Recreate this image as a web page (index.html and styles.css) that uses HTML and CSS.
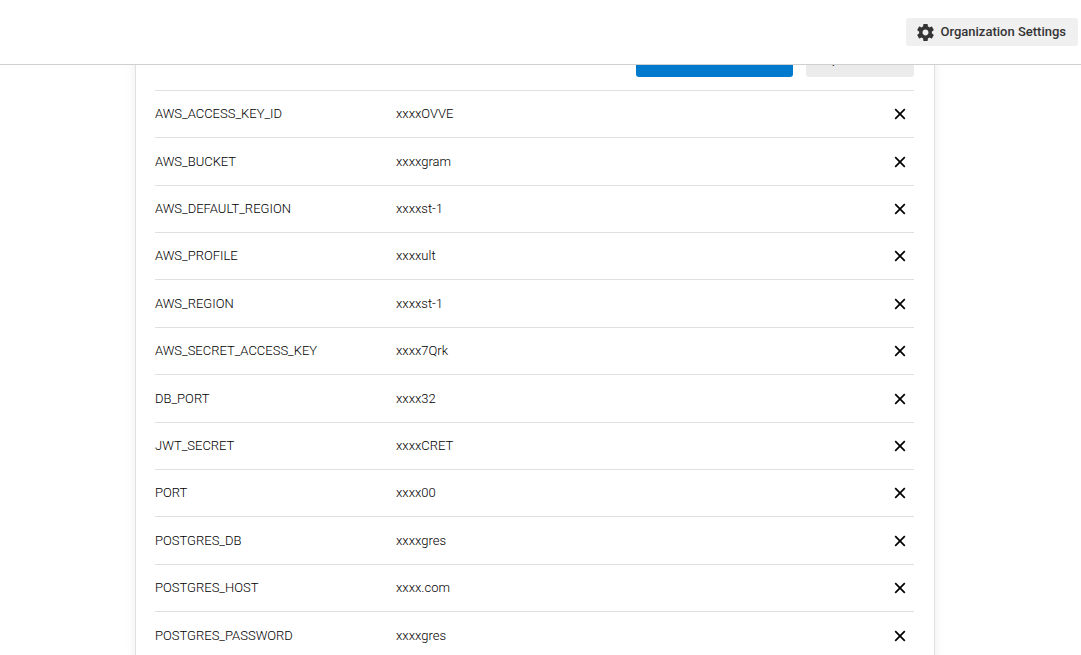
FILE: index.html
```
<!DOCTYPE html>
<html lang="en">
<head>
<meta charset="utf-8">
<title>Environment Variables</title>
<link rel="stylesheet" href="styles.css">
</head>
<body>
<svg class="symbols" aria-hidden="true">
  <symbol id="close" viewBox="0 0 12 12"><path d="M1.2 1.2 10.8 10.8M10.8 1.2 1.2 10.8" fill="none" stroke="currentColor" stroke-width="1.7"/></symbol>
</svg>
<header class="topbar">
  <button class="settings" type="button">
    <svg class="gear" viewBox="2 2 20 20" aria-hidden="true"><path fill="currentColor" d="M19.43 12.98c.04-.32.07-.64.07-.98s-.03-.66-.07-.98l2.11-1.65c.19-.15.24-.42.12-.64l-2-3.46c-.12-.22-.39-.3-.61-.22l-2.49 1c-.52-.4-1.08-.73-1.69-.98l-.38-2.65C14.46 2.18 14.25 2 14 2h-4c-.25 0-.46.18-.49.42l-.38 2.65c-.61.25-1.17.59-1.69.98l-2.49-1c-.23-.09-.49 0-.61.22l-2 3.46c-.13.22-.07.49.12.64l2.11 1.65c-.04.32-.07.65-.07.98s.03.66.07.98l-2.11 1.65c-.19.15-.24.42-.12.64l2 3.46c.12.22.39.3.61.22l2.49-1c.52.4 1.08.73 1.69.98l.38 2.65c.03.24.24.42.49.42h4c.25 0 .46-.18.49-.42l.38-2.65c.61-.25 1.17-.59 1.69-.98l2.49 1c.23.09.49 0 .61-.22l2-3.46c.12-.22.07-.49-.12-.64l-2.11-1.65zM12 15.5c-1.93 0-3.5-1.57-3.5-3.5s1.57-3.5 3.5-3.5 3.5 1.57 3.5 3.5-1.57 3.5-3.5 3.5z"/></svg>
    Organization Settings
  </button>
</header>
<main class="content">
  <section class="card">
    <div class="toolbar">
      <button class="action primary" type="button">Add Environment Variable</button>
      <button class="action" type="button">Import Variables</button>
    </div>
    <table class="vars">
      <tbody>
        <tr><td class="name">AWS_ACCESS_KEY_ID</td><td>xxxxOVVE</td><td class="remove"><button type="button" aria-label="Remove AWS_ACCESS_KEY_ID"><svg><use href="#close"/></svg></button></td></tr>
        <tr><td class="name">AWS_BUCKET</td><td>xxxxgram</td><td class="remove"><button type="button" aria-label="Remove AWS_BUCKET"><svg><use href="#close"/></svg></button></td></tr>
        <tr><td class="name">AWS_DEFAULT_REGION</td><td>xxxxst-1</td><td class="remove"><button type="button" aria-label="Remove AWS_DEFAULT_REGION"><svg><use href="#close"/></svg></button></td></tr>
        <tr><td class="name">AWS_PROFILE</td><td>xxxxult</td><td class="remove"><button type="button" aria-label="Remove AWS_PROFILE"><svg><use href="#close"/></svg></button></td></tr>
        <tr><td class="name">AWS_REGION</td><td>xxxxst-1</td><td class="remove"><button type="button" aria-label="Remove AWS_REGION"><svg><use href="#close"/></svg></button></td></tr>
        <tr><td class="name">AWS_SECRET_ACCESS_KEY</td><td>xxxx7Qrk</td><td class="remove"><button type="button" aria-label="Remove AWS_SECRET_ACCESS_KEY"><svg><use href="#close"/></svg></button></td></tr>
        <tr><td class="name">DB_PORT</td><td>xxxx32</td><td class="remove"><button type="button" aria-label="Remove DB_PORT"><svg><use href="#close"/></svg></button></td></tr>
        <tr><td class="name">JWT_SECRET</td><td>xxxxCRET</td><td class="remove"><button type="button" aria-label="Remove JWT_SECRET"><svg><use href="#close"/></svg></button></td></tr>
        <tr><td class="name">PORT</td><td>xxxx00</td><td class="remove"><button type="button" aria-label="Remove PORT"><svg><use href="#close"/></svg></button></td></tr>
        <tr><td class="name">POSTGRES_DB</td><td>xxxxgres</td><td class="remove"><button type="button" aria-label="Remove POSTGRES_DB"><svg><use href="#close"/></svg></button></td></tr>
        <tr><td class="name">POSTGRES_HOST</td><td>xxxx.com</td><td class="remove"><button type="button" aria-label="Remove POSTGRES_HOST"><svg><use href="#close"/></svg></button></td></tr>
        <tr><td class="name">POSTGRES_PASSWORD</td><td>xxxxgres</td><td class="remove"><button type="button" aria-label="Remove POSTGRES_PASSWORD"><svg><use href="#close"/></svg></button></td></tr>
      </tbody>
    </table>
  </section>
</main>
</body>
</html>
```

FILE: styles.css
```
* { box-sizing: border-box; }

body {
  margin: 0;
  height: 100vh;
  display: flex;
  flex-direction: column;
  overflow: hidden;
  background: #fff;
  color: #161616;
  font: 13px/16px Roboto, "Liberation Sans", sans-serif;
}

button {
  border: 0;
  font: inherit;
  color: inherit;
  cursor: pointer;
}

.symbols { display: none; }

.topbar {
  flex: none;
  display: flex;
  justify-content: flex-end;
  padding: 18px 3px;
  border-bottom: 1px solid #d0d0d0;
}

.settings {
  display: flex;
  align-items: center;
  gap: 7px;
  height: 28px;
  padding: 0 12px 0 11px;
  border-radius: 3px;
  background: #f0f0f0;
  color: #343434;
  font-weight: 500;
}

.gear {
  width: 17px;
  height: 17px;
}

.content {
  flex: 1;
  min-height: 0;
  overflow: hidden;
  padding-right: 11px;
}

/* The list is scrolled so that the toolbar is partly under the top bar. */
.card {
  max-width: 800px;
  margin: -20px auto 0;
  padding: 0 20px 0 19px;
  border: 1px solid #e0e0e0;
  border-top: 0;
  box-shadow: 0 0 10px rgba(0, 0, 0, 0.08);
}

.toolbar {
  display: flex;
  justify-content: flex-end;
  gap: 13px;
  padding-bottom: 13px;
}

.action {
  height: 32px;
  padding: 0 13px;
  border-radius: 3px;
  background: #ebebeb;
  color: #343434;
  font-size: 11px;
  font-weight: 500;
}

.primary {
  padding: 0 15px;
  background: #007acc;
  color: #fff;
}

.vars {
  width: 100%;
  border-spacing: 0;
  table-layout: fixed;
  font-weight: 300;
  color: #000;
}

.vars tr { height: 47px; }

.vars tr:nth-child(5n),
.vars tr:nth-child(5n + 2) { height: 48px; }

.vars td {
  padding: 0;
  border-top: 1px solid #e0e0e0;
  vertical-align: middle;
}

.vars .name { width: 241px; }

.vars .remove {
  width: 40px;
  text-align: right;
}

.remove button {
  display: block;
  margin-left: auto;
  padding: 8px;
  background: none;
  color: #000;
}

.remove svg {
  display: block;
  width: 12px;
  height: 12px;
}
```
